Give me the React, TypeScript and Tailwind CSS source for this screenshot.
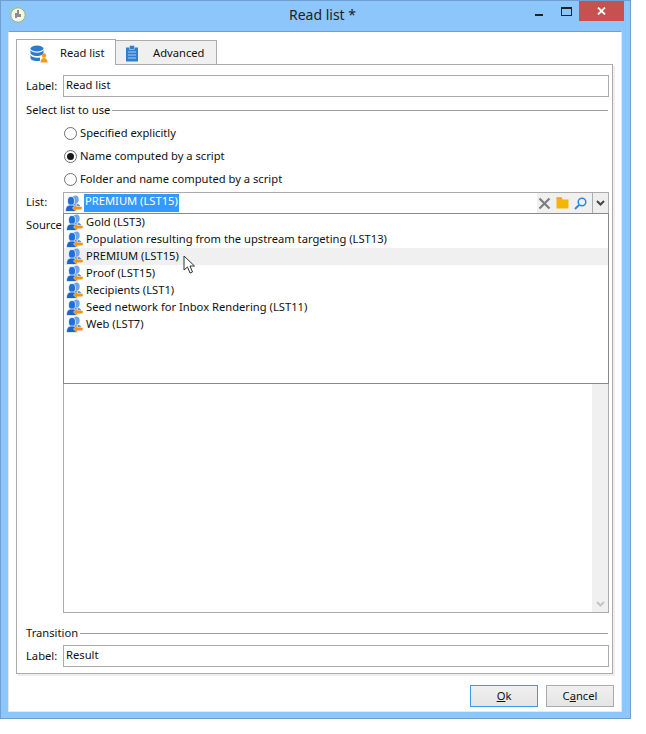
import React from 'react';

const font = { fontFamily: '"Noto Sans", sans-serif' };

function UsersIcon() {
  return (
    <svg width="17" height="17" viewBox="0 0 17 17" className="shrink-0">
      <ellipse cx="10.500" cy="4.500" rx="3.200" ry="4" fill="#6fa4e6" />
      <path d="M6 14c0-4 1.500-5.500 4.500-5.500S15 10 15.500 12v3H6z" fill="#5b93dc" />
      <ellipse cx="6" cy="6" rx="3.500" ry="4.500" fill="#1f6fd8" stroke="#fff" strokeWidth="0.700" />
      <path d="M0.500 16.500c0-4.500 1.500-6.500 5.500-6.500s5 2 5 6.500z" fill="#1c64c8" stroke="#fff" strokeWidth="0.700" />
      <path d="M7.500 13l4-4v2.500H17v3h-5.500V17z" fill="#f7920f" stroke="#fff" strokeWidth="0.500" />
    </svg>
  );
}

function Radio({ checked }: { checked?: boolean }) {
  return (
    <span className="w-[13px] h-[13px] rounded-full border border-[#707070] bg-white flex items-center justify-center shrink-0">
      {checked && <span className="w-[7px] h-[7px] rounded-full bg-[#1a1a1a]" />}
    </span>
  );
}

function Field({ label, value }: { label: string; value: string }) {
  return (
    <div className="flex items-center h-[22px]">
      <span className="w-[37px] shrink-0">{label}</span>
      <div className="flex-1 h-[22px] border border-[#ababab] bg-white pl-[2px] leading-[18px]">{value}</div>
    </div>
  );
}

function Section({ title }: { title: string }) {
  return (
    <div className="flex items-center h-[18px] gap-[2px]">
      <span>{title}</span>
      <span className="flex-1 h-px bg-[#a0a0a0]" />
    </div>
  );
}

const lists = [
  'Gold (LST3)',
  'Population resulting from the upstream targeting (LST13)',
  'PREMIUM (LST15)',
  'Proof (LST15)',
  'Recipients (LST1)',
  'Seed network for Inbox Rendering (LST11)',
  'Web (LST7)',
];

export default function App() {
  return (
    <div className="w-[646px] h-[734px] bg-white text-[11.2px] text-[#111]" style={font}>
      <div className="relative w-[631px] h-[719px] bg-[#8cc6fa] border border-[#6f9fd0] flex flex-col">
        {/* title bar */}
        <div className="h-[30px] shrink-0 relative flex items-center justify-center text-[14px] text-[#222] pb-[3px] pl-[14px]">
          <span>Read list *</span>
          <svg width="16" height="16" viewBox="0 0 16 16" className="absolute left-[9px] top-[6px]">
            <circle cx="8" cy="8" r="7.200" fill="#f4f4ee" stroke="#9ab86a" strokeWidth="1" />
            <path d="M8 3v7M6 6v5M10 7v3" stroke="#555" strokeWidth="1.300" fill="none" />
          </svg>
          <span className="absolute left-[534px] top-[13px] w-[8px] h-[2px] bg-[#222]" />
          <span className="absolute left-[560px] top-[6px] w-[11px] h-[9px] border border-[#222] border-t-[2px]" />
          <div className="absolute left-[578px] top-0 w-[45px] h-[20px] bg-[#c75050] flex items-center justify-center">
            <svg width="9" height="8" viewBox="0 0 9 8">
              <path d="M1 0.500l7 7M8 0.500l-7 7" stroke="#fff" strokeWidth="1.800" />
            </svg>
          </div>
        </div>

        {/* client area */}
        <div className="mx-[7px] w-[614px] h-[681px] bg-white border-t border-x border-b border-t-[#6f9fd0] border-x-[#e8e8e8] border-b-[#e8e8e8] px-[7px] pt-[7px] flex flex-col">
          {/* tabs */}
          <div className="flex items-end h-[25px] shrink-0 relative z-10">
            <div className="w-[100px] h-[26px] -mb-px bg-white border border-b-0 border-[#ababab] flex items-center pl-[13px] pt-[2px] gap-[12px]">
              <svg width="18" height="18" viewBox="0 0 18 18">
                <ellipse cx="7" cy="3.500" rx="6.500" ry="3" fill="#2b7cc9" />
                <path d="M0.500 5v3c0 1.500 3 3 6.500 3s6.500-1.500 6.500-3V5c-1 1.800-3.500 2.800-6.500 2.800S1.500 6.800 0.500 5z" fill="#2b7cc9" />
                <path d="M0.500 10v3c0 1.800 3 3 6.500 3 1 0 2-.1 3-.3V12.500c-1 .2-2 .3-3 .3-3 0-5.500-1-6.500-2.800z" fill="#2b7cc9" />
                <circle cx="14" cy="10.500" r="2.200" fill="#f09a1f" />
                <path d="M10.500 17.500c0-3 1.500-4.500 3.500-4.500s3.500 1.500 3.500 4.500z" fill="#f09a1f" />
              </svg>
              <span>Read list</span>
            </div>
            <div className="w-[101px] h-[24px] bg-[#f0f0f0] border border-l-0 border-b-0 border-[#ababab] flex items-center pl-[9px] pt-[2px] gap-[14px]">
              <svg width="14" height="17" viewBox="0 0 14 17">
                <rect x="1" y="2.500" width="12" height="14" fill="#2f7fce" />
                <rect x="4.500" y="0.500" width="5" height="4" fill="#2f7fce" stroke="#f0f0f0" strokeWidth="0.500" />
                <path d="M3 7h8M3 10h8M3 13h8" stroke="#a9d0f2" strokeWidth="1" />
              </svg>
              <span>Advanced</span>
            </div>
          </div>

          {/* panel */}
          <div className="w-[597px] h-[610px] shrink-0 border border-[#ababab] shadow-[2px_2px_0_#eeeeee] pl-[9px] pr-[3px] pt-[10px] flex flex-col">
            <Field label="Label:" value="Read list" />
            <div className="mt-[4px] pr-px">
              <Section title="Select list to use" />
            </div>
            <div className="pl-[37px] mt-[3px] flex flex-col">
              <div className="flex items-center h-[23px] pl-[1px] gap-[3px]"><Radio /><span>Specified explicitly</span></div>
              <div className="flex items-center h-[23px] pl-[1px] gap-[3px]"><Radio checked /><span>Name computed by a script</span></div>
              <div className="flex items-center h-[23px] pl-[1px] gap-[3px]"><Radio /><span>Folder and name computed by a script</span></div>
            </div>

            <div className="flex h-[21px] items-center mt-[1px]">
              <span className="w-[37px] shrink-0">List:</span>
              <div className="flex-1 h-[21px] flex border-t border-[#ababab] border-l">
                <div className="flex-1 flex items-center pl-[1px] gap-[2px]">
                  <UsersIcon />
                  <span className="bg-[#3399ff] text-white h-[18px] leading-[14px] px-[1px]">PREMIUM (LST15)</span>
                </div>
                <div className="w-[55px] bg-[#f0f0f0] flex items-center gap-[5px] pl-[1px]">
                  <svg width="13" height="13" viewBox="0 0 13 13">
                    <path d="M1.500 1.500l10 10M11.500 1.500l-10 10" stroke="#7d7d7d" strokeWidth="2.200" />
                  </svg>
                  <svg width="13" height="12" viewBox="0 0 13 12">
                    <path d="M0.500 0.500h5l1 2h6v9h-12z" fill="#f2b705" />
                    <path d="M0.500 0.500h5l1 1.500h-6z" fill="#f39a2e" />
                  </svg>
                  <svg width="13" height="13" viewBox="0 0 13 13">
                    <circle cx="8" cy="5" r="3.800" fill="none" stroke="#2e86d8" strokeWidth="1.500" />
                    <path d="M5 8l-4 4" stroke="#2e86d8" strokeWidth="1.800" />
                  </svg>
                </div>
                <div className="w-[17px] bg-[#eeeeee] border border-b-0 border-[#ababab] -mt-px flex items-center justify-center">
                  <svg width="9" height="6" viewBox="0 0 9 6">
                    <path d="M1 1l3.500 3.500L8 1" stroke="#444" strokeWidth="2" fill="none" />
                  </svg>
                </div>
              </div>
            </div>

            <div className="flex h-[400px]">
              <span className="w-[37px] shrink-0 mt-[4px] whitespace-nowrap">Source</span>
              <div className="relative flex-1 border border-[#ababab] bg-white flex justify-end">
                <div className="w-[16px] bg-[#f0f0f0] flex items-end justify-center pb-[5px]">
                  <svg width="9" height="6" viewBox="0 0 9 6">
                    <path d="M1 1l3.500 3.500L8 1" stroke="#c4c4c4" strokeWidth="2" fill="none" />
                  </svg>
                </div>
                {/* dropdown list */}
                <div className="absolute -left-px -top-px w-[546px] h-[171px] bg-white border border-[#8a8a8a]">
                  {lists.map((name, i) => (
                    <div key={name} className={`h-[17px] flex items-center pl-[2px] gap-[3px] ${i === 2 ? 'bg-[#f0f0f0]' : ''}`}>
                      <UsersIcon />
                      <span>{name}</span>
                    </div>
                  ))}
                </div>
              </div>
            </div>

            <div className="mt-[11px] pr-px">
              <Section title="Transition" />
            </div>
            <div className="mt-[3px]">
              <Field label="Label:" value="Result" />
            </div>
          </div>

          {/* buttons */}
          <div className="flex justify-end gap-[8px] mt-[11px] -mr-[2px] pr-[2px]">
            <button className="w-[68px] h-[22px] border border-[#3c9bf0] bg-gradient-to-b from-[#f0f0f0] to-[#e5e5e5]">
              <span className="underline">O</span>k
            </button>
            <button className="w-[68px] h-[22px] border border-[#ababab] bg-gradient-to-b from-[#f0f0f0] to-[#e5e5e5]">
              C<span className="underline">a</span>ncel
            </button>
          </div>
        </div>

        {/* mouse cursor */}
        <svg width="13" height="20" viewBox="0 0 13 20" className="absolute left-[182px] top-[254px]">
          <path d="M1 1v14l3.500-3 2.500 6 2.500-1-2.500-6h4.500z" fill="#fff" stroke="#333" strokeWidth="1" />
        </svg>
      </div>
    </div>
  );
}
